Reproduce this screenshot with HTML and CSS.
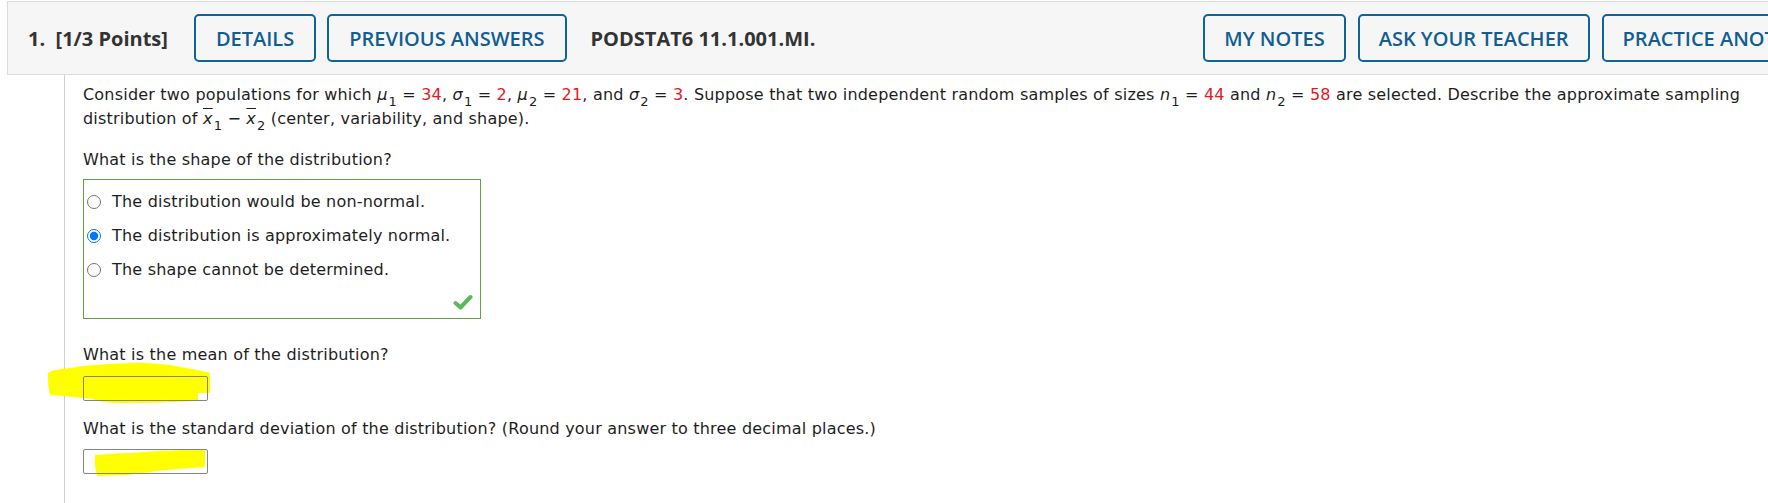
FILE: index.html
```html
<!DOCTYPE html>
<html>
<head>
<meta charset="utf-8">
<link rel="stylesheet" href="styles.css">
</head>
<body>
<div class="header">
  <span class="qnum">1.&nbsp; [1/3 Points]</span>
  <span class="btn">DETAILS</span>
  <span class="btn">PREVIOUS ANSWERS</span>
  <span class="code">PODSTAT6 11.1.001.MI.</span>
  <div class="right">
    <span class="btn">MY NOTES</span>
    <span class="btn">ASK YOUR TEACHER</span>
    <span class="btn">PRACTICE ANOTHER</span>
  </div>
</div>
<div class="content">
  <p class="prompt">Consider two populations for which <i class="m">μ</i><sub>1</sub> = <span class="red">34</span>, <i class="m">σ</i><sub>1</sub> = <span class="red">2</span>, <i class="m">μ</i><sub>2</sub> = <span class="red">21</span>, and <i class="m">σ</i><sub>2</sub> = <span class="red">3</span>. Suppose that two independent random samples of sizes <i class="m">n</i><sub>1</sub> = <span class="red">44</span> and <i class="m">n</i><sub>2</sub> = <span class="red">58</span> are selected. Describe the approximate sampling distribution of <span class="xbar">x</span><sub>1</sub> − <span class="xbar">x</span><sub>2</sub> (center, variability, and shape).</p>
  <p class="q q-shape">What is the shape of the distribution?</p>
  <div class="answers">
    <label class="opt"><input type="radio" name="shape"><span>The distribution would be non-normal.</span></label>
    <label class="opt"><input type="radio" name="shape" checked><span>The distribution is approximately normal.</span></label>
    <label class="opt"><input type="radio" name="shape"><span>The shape cannot be determined.</span></label>
    <div class="mark">
      <svg width="20" height="17" viewBox="0 0 20 17"><polyline points="2.5,9 7.5,13.5 17.5,3" fill="none" stroke="#5cb85c" stroke-width="4" stroke-linecap="round" stroke-linejoin="round"/></svg>
    </div>
  </div>
  <p class="q q-mean">What is the mean of the distribution?</p>
  <div class="field field-mean">
    <svg class="hl hl1" width="163" height="41" viewBox="0 0 163 41"><path d="M0,10 C5,7 10,6 15,6 C30,4 40,2 49,2 C70,0 90,0 99,0 C115,1 125,2 132,4 C145,6 155,8 162,10 L162,30 L150,30 L150,38 C130,39 100,40 65,40 C55,39 50,38 45,36 C30,34 15,33 2,32 C0,25 0,15 0,10 Z" fill="#ffff00"/></svg>
    <input class="box" type="text">
  </div>
  <p class="q q-sd">What is the standard deviation of the distribution? (Round your answer to three decimal places.)</p>
  <div class="field field-sd">
    <svg class="hl hl2" width="111" height="28" viewBox="0 0 111 28"><path d="M0,6 C12,5 25,4 35,4 C50,3 60,2 68,2 L110,0 L110,18 C95,19 80,20 62,22 C50,24 40,25 32,26 C20,26 10,27 2,27 L0,16 Z" fill="#ffff00"/></svg>
    <input class="box" type="text">
  </div>
</div>
</body>
</html>
```
FILE: styles.css
```css
html, body {
  margin: 0;
  padding: 0;
  overflow: hidden;
  background: #fff;
}
body {
  width: 1768px;
  height: 503px;
  font-family: "DejaVu Sans", Verdana, sans-serif;
  color: #1e1e1e;
}
.header {
  margin: 1px 0 0 7px;
  width: 1900px;
  height: 74px;
  background: #f6f6f6;
  border: 1px solid #dcdcdc;
  border-right: none;
  display: flex;
  align-items: center;
  padding-left: 20px;
  box-sizing: border-box;
  font-family: "Open Sans", sans-serif;
  font-size: 20px;
  white-space: nowrap;
}
.qnum {
  font-weight: 700;
  color: #333;
  margin-right: 26px;
}
.btn {
  display: inline-flex;
  align-items: center;
  height: 44px;
  padding: 0 20px;
  border: 2px solid #0f6496;
  border-radius: 5px;
  color: #135e91;
  font-weight: 600;
}
.btn + .btn {
  margin-left: 11px;
}
.right .btn + .btn {
  margin-left: 12px;
}
.right .btn {
  padding: 0 19px;
}
.code {
  font-weight: 700;
  color: #333;
  margin-left: 24px;
}
.right {
  display: flex;
  margin-left: 388px;
}
.content {
  margin-left: 64px;
  border-left: 1px solid #cfcfcf;
  padding: 8px 0 0 18px;
  height: 440px;
  font-size: 16px;
  letter-spacing: 0.2px;
}
p {
  margin: 0;
}
.prompt {
  line-height: 24px;
  width: 1680px;
}
.m {
  font-style: italic;
}
sub {
  font-size: 13px;
  vertical-align: -6px;
  line-height: 0;
  margin-left: 1px;
}
.red {
  color: #e3191f;
}
.xbar {
  font-style: italic;
  text-decoration: overline;
}
.q {
  line-height: 24px;
}
.q-shape {
  margin-top: 17px;
}
.answers {
  margin-top: 7px;
  width: 396px;
  height: 133px;
  border: 1px solid #62a33e;
  padding-top: 5px;
  box-sizing: content-box;
  display: flex;
  flex-direction: column;
}
.opt {
  display: flex;
  align-items: center;
  height: 34px;
  padding-left: 3px;
  gap: 11px;
  line-height: 20px;
}
.opt input {
  margin: 0;
  width: 14px;
  height: 14px;
}
.mark {
  display: flex;
  justify-content: flex-end;
  padding: 7px 7px 0 0;
}
.q-mean {
  margin-top: 24px;
}
.q-sd {
  margin-top: 16px;
}
.field {
  position: relative;
  height: 25px;
}
.field-mean {
  margin-top: 9px;
}
.field-sd {
  margin-top: 8px;
}
.box {
  position: relative;
  z-index: 1;
  display: block;
  margin: 0;
  width: 125px;
  height: 25px;
  box-sizing: border-box;
  border: 1px solid #858585;
  border-radius: 2px;
  background: transparent;
}
.hl {
  position: absolute;
  z-index: 0;
  pointer-events: none;
}
.hl1 {
  left: -35px;
  top: -13px;
}
.hl2 {
  left: 12px;
  top: 0;
}
```
